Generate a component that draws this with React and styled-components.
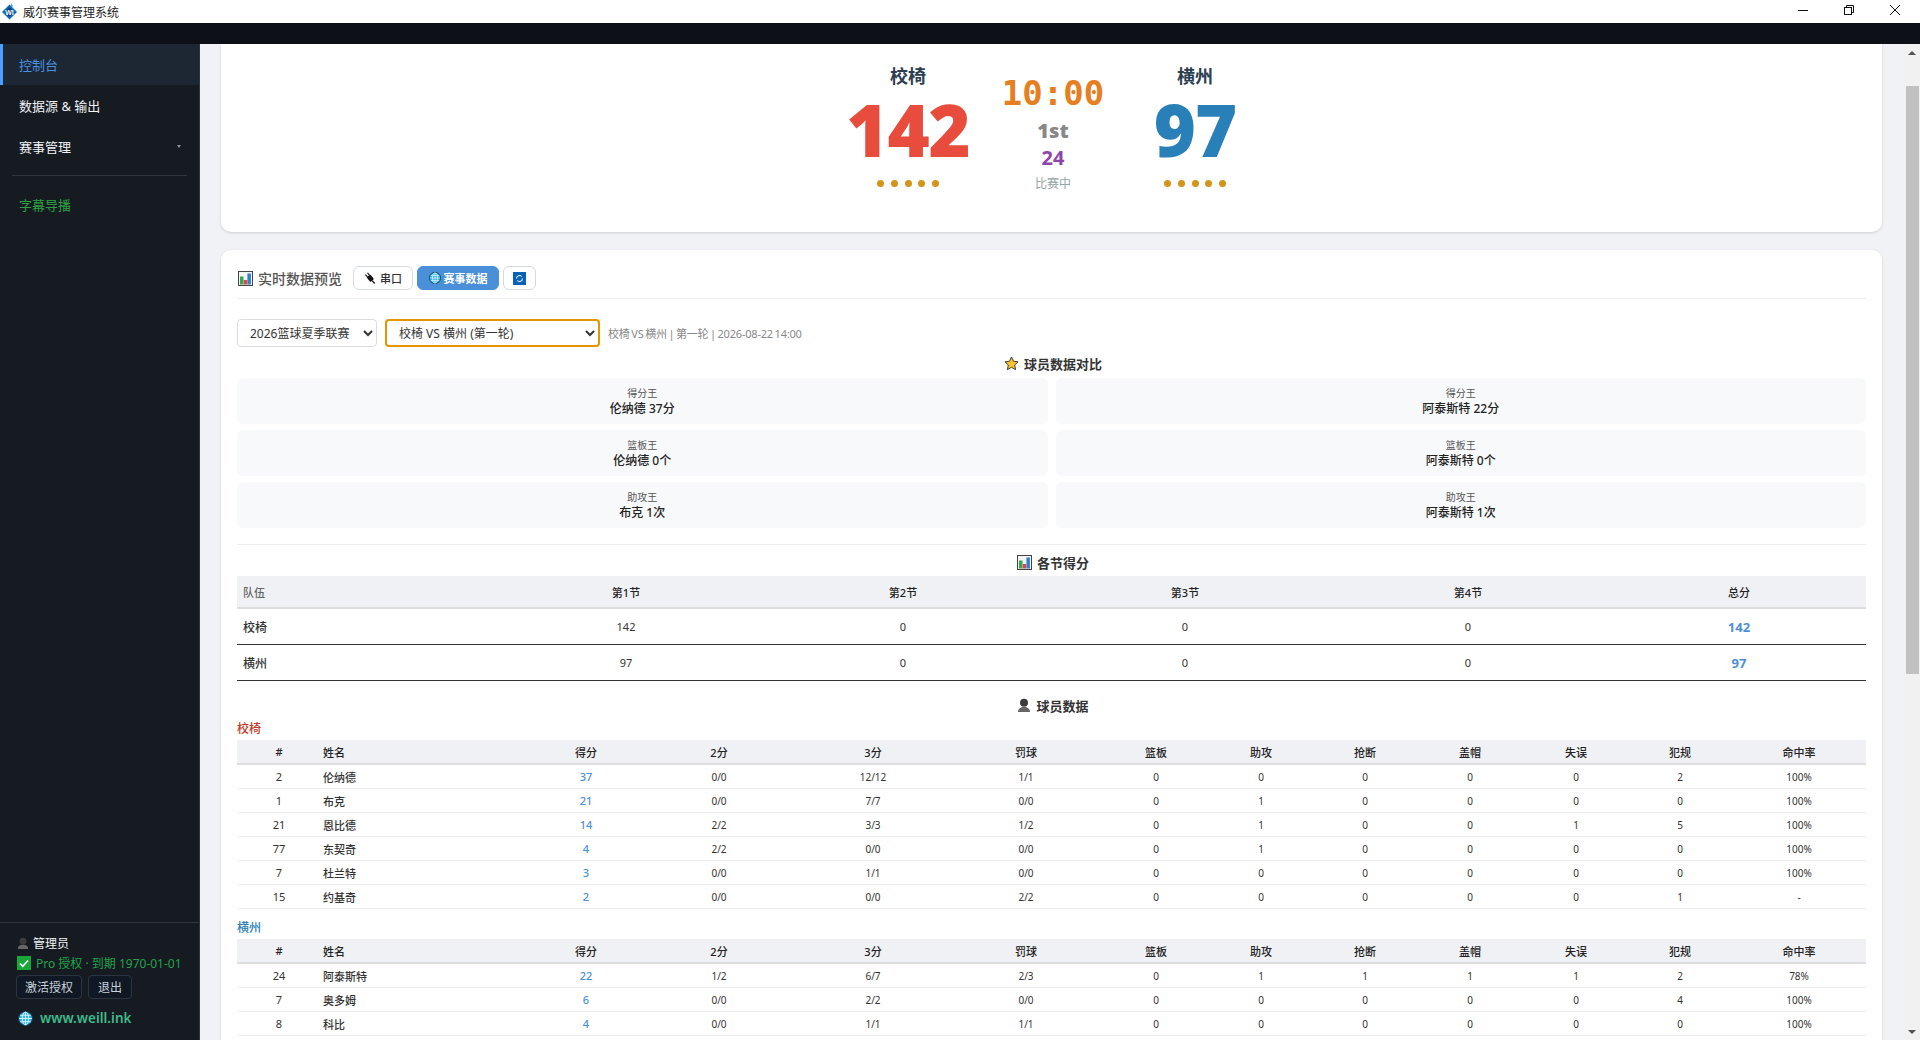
import React from 'react';
import styled, { createGlobalStyle } from 'styled-components';

const GlobalStyle = createGlobalStyle`
  * {
    box-sizing: border-box;
  }
  html, body {
    margin: 0;
    padding: 0;
    height: 100%;
    overflow: hidden;
    font-family: "Noto Sans", "Noto Sans CJK SC", sans-serif;
  }
`

const Shell = styled.div`
  display: flex;
  flex-direction: column;
  height: 100vh;
  background: #f0f2f5;
`

const TitleBar = styled.div`
  display: flex;
  align-items: center;
  height: 23px;
  flex-shrink: 0;
  background: #fff;
  color: #222;
  font-size: 12px;
  padding-left: 2px;
`

const TitleText = styled.span`
  margin-left: 6px;
`

const WindowControls = styled.div`
  display: flex;
  margin-left: auto;
  padding-right: 2px;
  height: 100%;
`

const WindowBtn = styled.div`
  display: flex;
  align-items: flex-start;
  justify-content: center;
  width: 46px;
  padding-top: 5px;
`

const DarkStrip = styled.div`
  height: 21px;
  flex-shrink: 0;
  background: #0d1117;
`

const Body = styled.div`
  display: flex;
  flex: 1;
  min-height: 0;
`

const Sidebar = styled.aside`
  display: flex;
  flex-direction: column;
  width: 200px;
  flex-shrink: 0;
  background: #161b22;
  border-right: 1px solid #30363d;
`

const Nav = styled.nav`
  flex: 1;
`

const NavItem = styled.div`
  display: flex;
  align-items: center;
  height: 41px;
  font-size: 13px;
  padding-left: ${p => (p.$active ? '16px' : '19px')};
  padding-right: 18px;
  color: ${p => (p.$active ? '#4a90e2' : p.$green ? '#2ea043' : '#f0f3f6')};
  background: ${p => (p.$active ? '#1c2733' : 'transparent')};
  border-left: ${p => (p.$active ? '3px solid #4a9eff' : 'none')};
`

const Caret = styled.span`
  margin-left: auto;
  width: 0;
  height: 0;
  border-left: 2px solid transparent;
  border-right: 2px solid transparent;
  border-top: 3px solid #8b949e;
`

const NavDivider = styled.div`
  height: 1px;
  margin: 8px 12px;
  background: #30363d;
`

const SideFooter = styled.div`
  display: flex;
  flex-direction: column;
  gap: 4px;
  padding: 12px 16px 13px;
  border-top: 1px solid #30363d;
`

const UserRow = styled.div`
  display: flex;
  align-items: center;
  height: 16px;
  gap: 4px;
  padding-left: 1px;
  font-size: 12px;
  color: #f0f3f6;
`

const LicenseRow = styled(UserRow)`
  gap: 5px;
  color: #22a34a;
  white-space: nowrap;
`

const FooterBtns = styled.div`
  display: flex;
  gap: 6px;
`

const FooterBtn = styled.div`
  display: flex;
  align-items: center;
  justify-content: center;
  height: 24px;
  width: ${p => p.$w}px;
  font-size: 12px;
  color: #c9d1d9;
  background: #0f1823;
  border: 1px solid #2a3442;
  border-radius: 4px;
`

const SiteLink = styled.div`
  display: flex;
  align-items: center;
  gap: 7px;
  height: 16px;
  margin-top: 7px;
  margin-bottom: 1px;
  margin-left: 2px;
  font-size: 13.5px;
  font-weight: 600;
  color: #3dba8c;
`

const Main = styled.main`
  display: flex;
  flex: 1;
  min-width: 0;
`

const Content = styled.div`
  flex: 1;
  min-width: 0;
  overflow: hidden;
  padding: 0 22px 0 21px;
`

const ScrollTrack = styled.div`
  display: flex;
  flex-direction: column;
  align-items: center;
  width: 16px;
  flex-shrink: 0;
  background: #f1f1f1;
`

const ScrollArrow = styled.div`
  display: flex;
  align-items: center;
  justify-content: center;
  height: 17px;
  flex-shrink: 0;
`

const ScrollThumb = styled.div`
  width: 13px;
  height: 588px;
  margin-top: 25px;
  margin-bottom: auto;
  background: #c1c1c1;
`

const ArrowUp = styled.span`
  width: 0;
  height: 0;
  border-left: 4px solid transparent;
  border-right: 4px solid transparent;
  border-bottom: 4px solid #505050;
`

const ArrowDown = styled.span`
  width: 0;
  height: 0;
  border-left: 4px solid transparent;
  border-right: 4px solid transparent;
  border-top: 4px solid #505050;
`

const ScoreCard = styled.section`
  display: grid;
  grid-template-columns: 180px 110px 174px;
  justify-content: center;
  height: 188px;
  padding-right: 3px;
  margin-bottom: 18px;
  background: #fff;
  border-radius: 0 0 10px 10px;
  box-shadow: 0 1px 3px rgba(0, 0, 0, 0.14);
`

const TeamCol = styled.div`
  display: flex;
  flex-direction: column;
  align-items: center;
`

const TeamName = styled.div`
  margin-top: 20px;
  height: 24px;
  line-height: 24px;
  font-size: 18px;
  font-weight: 700;
  color: #2c3e50;
`

const Score = styled.div`
  height: 76px;
  line-height: 76px;
  margin-top: 3px;
  font-size: 72px;
  font-weight: 900;
  letter-spacing: -1px;
  color: ${p => p.$color};
`

const Fouls = styled.div`
  display: flex;
  gap: 6.7px;
  margin-top: 13px;
`

const FoulDot = styled.span`
  width: 7px;
  height: 7px;
  border-radius: 50%;
  background: #d4941a;
`

const CenterCol = styled.div`
  display: flex;
  flex-direction: column;
  align-items: center;
`

const Clock = styled.div`
  margin-top: 28px;
  height: 42px;
  line-height: 42px;
  font-family: "DejaVu Sans Mono", "Liberation Mono", monospace;
  font-size: 34px;
  font-weight: 700;
  color: #e67e22;
`

const Period = styled.div`
  height: 28px;
  line-height: 28px;
  margin-top: 3px;
  font-size: 20px;
  font-weight: 900;
  color: #888;
`

const ShotClock = styled.div`
  height: 24px;
  line-height: 24px;
  margin-top: 1px;
  font-size: 20px;
  font-weight: 700;
  color: #8e44ad;
`

const GameState = styled.div`
  height: 16px;
  line-height: 16px;
  margin-top: 6px;
  font-size: 12px;
  color: #95a5a6;
`

const DataCard = styled.section`
  padding: 16px;
  background: #fff;
  border-radius: 10px;
  box-shadow: 0 1px 3px rgba(0, 0, 0, 0.14);
`

const CardHeader = styled.div`
  display: flex;
  align-items: center;
  height: 33px;
  padding-bottom: 8px;
  border-bottom: 1px solid #eee;
`

const CardTitle = styled.div`
  display: flex;
  align-items: center;
  gap: 5px;
  margin-left: 1px;
  margin-right: 11px;
  font-size: 14px;
  font-weight: 500;
  color: #555;
`

const TabBtn = styled.div`
  display: flex;
  align-items: center;
  justify-content: center;
  gap: 3px;
  width: ${p => p.$w}px;
  height: 24px;
  margin-right: 4px;
  font-size: 11px;
  font-weight: ${p => (p.$active ? 700 : 500)};
  color: ${p => (p.$active ? '#fff' : '#333')};
  background: ${p => (p.$active ? '#4a90d9' : '#fff')};
  border: 1px solid ${p => (p.$active ? '#4a90d9' : '#d5d9e0')};
  border-radius: 6px;
`

const FilterRow = styled.div`
  display: flex;
  align-items: center;
  gap: 8px;
  margin-top: 20px;
  height: 28px;
`

const Select = styled.select`
  width: ${p => p.$w}px;
  height: 28px;
  padding: 0 8px;
  font-family: inherit;
  font-size: 12px;
  color: #333;
  background: #fff;
  border: ${p => (p.$focus ? '2px solid #e69500' : '1px solid #ddd')};
  border-radius: 4px;
  outline: none;
`

const MatchInfo = styled.span`
  font-size: 11px;
  letter-spacing: -0.2px;
  word-spacing: -1px;
  color: #888;
`

const SectionTitle = styled.div`
  display: flex;
  align-items: center;
  justify-content: center;
  gap: 5px;
  height: 20px;
  padding-left: 3px;
  margin-top: ${p => p.$top}px;
  margin-bottom: ${p => p.$bottom}px;
  font-size: 13px;
  font-weight: 600;
  color: #333;
`

const LeaderGrid = styled.div`
  display: grid;
  grid-template-columns: 1fr 1fr;
  gap: 6px 8px;
`

const LeaderCard = styled.div`
  display: flex;
  flex-direction: column;
  align-items: center;
  justify-content: center;
  height: 46px;
  background: #f8f9fb;
  border-radius: 6px;
`

const LeaderLabel = styled.div`
  height: 14px;
  line-height: 14px;
  font-size: 10px;
  color: #555;
`

const LeaderValue = styled.div`
  height: 17px;
  line-height: 17px;
  font-size: 12px;
  font-weight: 500;
  color: #222;
`

const Divider = styled.div`
  height: 1px;
  margin-top: 16px;
  background: #eee;
`

const Table = styled.table`
  width: 1629px;
  table-layout: fixed;
  border-collapse: separate;
  border-spacing: 0;
`

const Col = styled.col`
  width: ${p => p.$w}px;
`

const PeriodTh = styled.th`
  height: 33px;
  padding: 0 6px;
  font-size: 11px;
  font-weight: 500;
  text-align: ${p => (p.$left ? 'left' : 'center')};
  color: ${p => (p.$left ? '#666' : '#222')};
  background: #f0f1f5;
  border-bottom: 2px solid #ddd;
`

const PeriodTd = styled.td`
  height: 36px;
  padding: 0 6px;
  font-size: ${p => (p.$total ? '13px' : p.$team ? '12px' : '11px')};
  font-weight: ${p => (p.$total ? 700 : p.$team ? 500 : 400)};
  text-align: ${p => (p.$team ? 'left' : 'center')};
  color: ${p => (p.$total ? '#4a90d9' : '#333')};
  border-bottom: 1px solid #333;
`

const TeamHeading = styled.div`
  height: 16px;
  line-height: 16px;
  margin-top: ${p => p.$top}px;
  margin-bottom: 3px;
  font-size: 12px;
  font-weight: 500;
  color: ${p => p.$color};
`

const PlayerTh = styled.th`
  height: 25px;
  padding: 0 2px;
  font-size: 11px;
  font-weight: 500;
  text-align: ${p => (p.$left ? 'left' : 'center')};
  color: #222;
  background: #f0f1f5;
  border-bottom: 2px solid #ddd;
`

const PlayerTd = styled.td`
  height: 24px;
  padding: 0 2px;
  font-size: ${p => (p.$big ? '11px' : '10px')};
  font-weight: ${p => (p.$points || p.$left ? 500 : 400)};
  text-align: ${p => (p.$left ? 'left' : 'center')};
  color: ${p => (p.$points ? '#4a90d9' : '#333')};
  border-bottom: 1px solid #eee;
`

const COLUMNS = ['#', '姓名', '得分', '2分', '3分', '罚球', '篮板', '助攻', '抢断', '盖帽', '失误', '犯规', '命中率'];
const COL_WIDTHS = [84, 211, 108, 158, 150, 156, 104, 106, 102, 108, 104, 104, 134];
const PERIOD_WIDTHS = [255, 268, 286, 278, 288, 254];

const HOME_PLAYERS = [
  ['2', '伦纳德', '37', '0/0', '12/12', '1/1', '0', '0', '0', '0', '0', '2', '100%'],
  ['1', '布克', '21', '0/0', '7/7', '0/0', '0', '1', '0', '0', '0', '0', '100%'],
  ['21', '恩比德', '14', '2/2', '3/3', '1/2', '0', '1', '0', '0', '1', '5', '100%'],
  ['77', '东契奇', '4', '2/2', '0/0', '0/0', '0', '1', '0', '0', '0', '0', '100%'],
  ['7', '杜兰特', '3', '0/0', '1/1', '0/0', '0', '0', '0', '0', '0', '0', '100%'],
  ['15', '约基奇', '2', '0/0', '0/0', '2/2', '0', '0', '0', '0', '0', '1', '-'],
];

const AWAY_PLAYERS = [
  ['24', '阿泰斯特', '22', '1/2', '6/7', '2/3', '0', '1', '1', '1', '1', '2', '78%'],
  ['7', '奥多姆', '6', '0/0', '2/2', '0/0', '0', '0', '0', '0', '0', '4', '100%'],
  ['8', '科比', '4', '0/0', '1/1', '1/1', '0', '0', '0', '0', '0', '0', '100%'],
];

const LEADERS = [
  ['得分王', '伦纳德 37分'],
  ['得分王', '阿泰斯特 22分'],
  ['篮板王', '伦纳德 0个'],
  ['篮板王', '阿泰斯特 0个'],
  ['助攻王', '布克 1次'],
  ['助攻王', '阿泰斯特 1次'],
];

function ChartIcon() {
  return (
    <svg width="15" height="15" viewBox="0 0 15 15">
      <rect x="0.5" y="0.5" width="14" height="14" fill="#f4f4f4" stroke="#444" />
      <rect x="2" y="5.5" width="3.5" height="8" fill="#35a853" />
      <rect x="5.7" y="9" width="3.5" height="4.5" fill="#e0483e" />
      <rect x="9.4" y="2.5" width="3.5" height="11" fill="#2f7fd6" />
    </svg>
  );
}

function GlobeIcon({ size = 13 }) {
  return (
    <svg width={size} height={size} viewBox="0 0 14 14">
      <circle cx="7" cy="7" r="6.5" fill="#35b3e8" stroke="#0d3b52" strokeWidth="1" />
      <path d="M1 7h12M2 4h10M2 10h10M7 1v12" stroke="#e6f7ff" strokeWidth="0.8" fill="none" />
      <ellipse cx="7" cy="7" rx="3" ry="6" stroke="#e6f7ff" strokeWidth="0.8" fill="none" />
    </svg>
  );
}

function PersonIcon({ size = 12 }) {
  return (
    <svg width={size} height={size} viewBox="0 0 14 14">
      <circle cx="7" cy="4.8" r="4" fill="#3c3c3c" />
      <path d="M1 14c0-3.5 2.6-5 6-5s6 1.5 6 5z" fill="#666" />
    </svg>
  );
}

function Logo() {
  return (
    <svg width="15" height="17" viewBox="0 0 15 17">
      <path d="M9.5 0l1.5 3.5-2.5 0.5z" fill="#35b3e8" />
      <path d="M7.5 1.5L15 9l-7.5 7.5L0 9z" fill="#0a6fc2" />
      <path d="M7.5 4L12.5 9l-5 5-5-5z" fill="#0b3f7a" />
      <text x="7.5" y="11.5" fontSize="7" fontWeight="700" textAnchor="middle" fill="#fff" fontFamily="Liberation Sans">WI</text>
    </svg>
  );
}

function PlayerTable({ rows }) {
  return (
    <Table>
      <colgroup>
        {COL_WIDTHS.map((w, i) => <Col key={i} $w={w} />)}
      </colgroup>
      <thead>
        <tr>
          {COLUMNS.map((c, i) => <PlayerTh key={c} $left={i === 1}>{c}</PlayerTh>)}
        </tr>
      </thead>
      <tbody>
        {rows.map(row => (
          <tr key={row[1]}>
            {row.map((cell, i) => (
              <PlayerTd key={i} $left={i === 1} $big={i < 3} $points={i === 2}>{cell}</PlayerTd>
            ))}
          </tr>
        ))}
      </tbody>
    </Table>
  );
}

function TeamScore({ name, score, color }) {
  return (
    <TeamCol>
      <TeamName>{name}</TeamName>
      <Score $color={color}>{score}</Score>
      <Fouls>
        {[0, 1, 2, 3, 4].map(i => <FoulDot key={i} />)}
      </Fouls>
    </TeamCol>
  );
}

function App() {
  return (
    <Shell>
      <GlobalStyle />
      <TitleBar>
        <Logo />
        <TitleText>威尔赛事管理系统</TitleText>
        <WindowControls>
          <WindowBtn>
            <svg width="10" height="10" viewBox="0 0 10 10"><path d="M0 5.5h10" stroke="#111" /></svg>
          </WindowBtn>
          <WindowBtn>
            <svg width="10" height="10" viewBox="0 0 10 10" fill="none" stroke="#111">
              <rect x="0.5" y="2.5" width="7" height="7" />
              <path d="M2.5 2.5v-2h7v7h-2" />
            </svg>
          </WindowBtn>
          <WindowBtn>
            <svg width="10" height="10" viewBox="0 0 10 10"><path d="M0 0l10 10M10 0L0 10" stroke="#111" /></svg>
          </WindowBtn>
        </WindowControls>
      </TitleBar>
      <DarkStrip />
      <Body>
        <Sidebar>
          <Nav>
            <NavItem $active>控制台</NavItem>
            <NavItem>数据源 &amp; 输出</NavItem>
            <NavItem>赛事管理<Caret /></NavItem>
            <NavDivider />
            <NavItem $green>字幕导播</NavItem>
          </Nav>
          <SideFooter>
            <UserRow><PersonIcon />管理员</UserRow>
            <LicenseRow>
              <svg width="14" height="14" viewBox="0 0 14 14">
                <rect width="14" height="14" fill="#18a83a" />
                <path d="M3 7.5l2.8 2.8L11 4.5" stroke="#fff" strokeWidth="1.6" fill="none" />
              </svg>
              Pro 授权 · 到期 1970-01-01
            </LicenseRow>
            <FooterBtns>
              <FooterBtn $w={66}>激活授权</FooterBtn>
              <FooterBtn $w={44}>退出</FooterBtn>
            </FooterBtns>
            <SiteLink><GlobeIcon size={15} />www.weill.ink</SiteLink>
          </SideFooter>
        </Sidebar>
        <Main>
          <Content>
            <ScoreCard>
              <TeamScore name="校椅" score="142" color="#e74c3c" />
              <CenterCol>
                <Clock>10:00</Clock>
                <Period>1st</Period>
                <ShotClock>24</ShotClock>
                <GameState>比赛中</GameState>
              </CenterCol>
              <TeamScore name="横州" score="97" color="#2980b9" />
            </ScoreCard>

            <DataCard>
              <CardHeader>
                <CardTitle><ChartIcon />实时数据预览</CardTitle>
                <TabBtn $w={60}>
                  <svg width="13" height="13" viewBox="0 0 12 12">
                    <g transform="rotate(-40 6 6)" fill="#111">
                      <rect x="3.8" y="3" width="4.4" height="5.5" rx="1" />
                      <rect x="4.2" y="0.2" width="1.1" height="3" />
                      <rect x="6.7" y="0.2" width="1.1" height="3" />
                      <rect x="5.4" y="8.5" width="1.2" height="3.5" />
                    </g>
                  </svg>
                  串口
                </TabBtn>
                <TabBtn $w={82} $active><GlobeIcon size={12} />赛事数据</TabBtn>
                <TabBtn $w={33}>
                  <svg width="13" height="13" viewBox="0 0 13 13">
                    <rect width="13" height="13" fill="#0a62b8" />
                    <path d="M3.5 6.5a3 3 0 0 1 5.2-2M9.5 6.5a3 3 0 0 1-5.2 2" stroke="#dff1ff" strokeWidth="1.1" fill="none" />
                  </svg>
                </TabBtn>
              </CardHeader>

              <FilterRow>
                <Select $w={140} defaultValue="a"><option value="a">2026篮球夏季联赛</option></Select>
                <Select $w={215} $focus defaultValue="b"><option value="b">校椅 VS 横州 (第一轮)</option></Select>
                <MatchInfo>校椅 VS 横州 | 第一轮 | 2026-08-22 14:00</MatchInfo>
              </FilterRow>

              <SectionTitle $top={6} $bottom={5}>
                <svg width="15" height="15" viewBox="0 0 24 24">
                  <path d="M12 1.5l3.2 6.9 7.3.9-5.4 5.1 1.4 7.4L12 18.1l-6.5 3.7 1.4-7.4L1.5 9.3l7.3-.9z" fill="#f9c22e" stroke="#333" strokeWidth="1.5" />
                </svg>
                球员数据对比
              </SectionTitle>
              <LeaderGrid>
                {LEADERS.map(([label, value], i) => (
                  <LeaderCard key={i}>
                    <LeaderLabel>{label}</LeaderLabel>
                    <LeaderValue>{value}</LeaderValue>
                  </LeaderCard>
                ))}
              </LeaderGrid>
              <Divider />

              <SectionTitle $top={7} $bottom={4}><ChartIcon />各节得分</SectionTitle>
              <Table>
                <colgroup>
                  {PERIOD_WIDTHS.map((w, i) => <Col key={i} $w={w} />)}
                </colgroup>
                <thead>
                  <tr>
                    <PeriodTh $left>队伍</PeriodTh>
                    <PeriodTh>第1节</PeriodTh>
                    <PeriodTh>第2节</PeriodTh>
                    <PeriodTh>第3节</PeriodTh>
                    <PeriodTh>第4节</PeriodTh>
                    <PeriodTh>总分</PeriodTh>
                  </tr>
                </thead>
                <tbody>
                  <tr>
                    <PeriodTd $team>校椅</PeriodTd>
                    <PeriodTd>142</PeriodTd>
                    <PeriodTd>0</PeriodTd>
                    <PeriodTd>0</PeriodTd>
                    <PeriodTd>0</PeriodTd>
                    <PeriodTd $total>142</PeriodTd>
                  </tr>
                  <tr>
                    <PeriodTd $team>横州</PeriodTd>
                    <PeriodTd>97</PeriodTd>
                    <PeriodTd>0</PeriodTd>
                    <PeriodTd>0</PeriodTd>
                    <PeriodTd>0</PeriodTd>
                    <PeriodTd $total>97</PeriodTd>
                  </tr>
                </tbody>
              </Table>

              <SectionTitle $top={14} $bottom={6}><PersonIcon size={14} />球员数据</SectionTitle>
              <TeamHeading $top={0} $color="#c0392b">校椅</TeamHeading>
              <PlayerTable rows={HOME_PLAYERS} />
              <TeamHeading $top={11} $color="#2980b9">横州</TeamHeading>
              <PlayerTable rows={AWAY_PLAYERS} />
            </DataCard>
          </Content>
          <ScrollTrack>
            <ScrollArrow><ArrowUp /></ScrollArrow>
            <ScrollThumb />
            <ScrollArrow><ArrowDown /></ScrollArrow>
          </ScrollTrack>
        </Main>
      </Body>
    </Shell>
  );
}

export default App;
